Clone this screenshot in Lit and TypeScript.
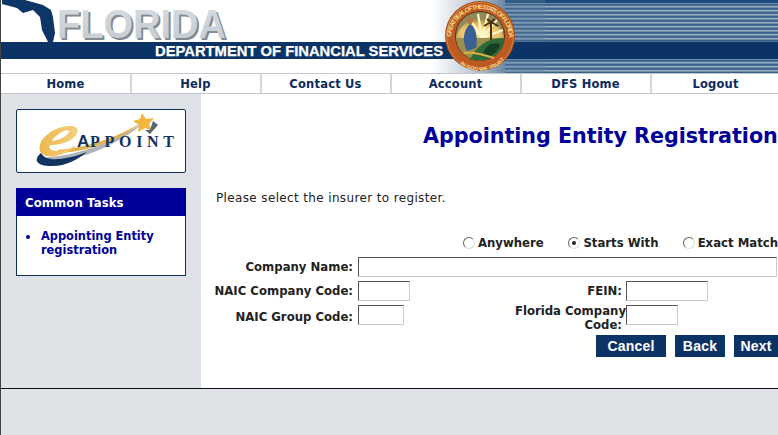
import { LitElement, html, css } from "lit";
import { customElement } from "lit/decorators.js";

@customElement("app-root")
export class AppRoot extends LitElement {
  static styles = css`
    :host { display: block; width: 778px; height: 435px; overflow: hidden; background: #fff; font-family: "DejaVu Sans", Verdana, sans-serif; font-size: 12px; color: #111; }
    * { box-sizing: border-box; }
    .page { display: flex; flex-direction: column; height: 435px; border-left: 1px solid #444; }
    .banner { display: block; height: 73px; flex: none; }
    .nav { display: flex; height: 21px; flex: none; padding-left: 1px; border-top: 1px solid #c4c8cc; border-bottom: 1px solid #c4c8cc; }
    .nav a { width: 130px; flex: none; display: flex; align-items: center; justify-content: center; font-weight: bold; font-size: 11.5px; letter-spacing: .2px; color: #0c2a5c; border-right: 2px solid #d4d6d8; padding: 1px 1px 0 0; }
    .body { display: flex; height: 294px; flex: none; }
    .side { width: 200px; flex: none; background: #dfe3e7; padding: 15px 15px 0; display: flex; flex-direction: column; gap: 15px; }
    .logo { height: 64px; width: 170px; background: #fff; border: 1px solid #0c2f5c; border-radius: 2px; }
    .logo svg { display: block; }
    .tasks { width: 170px; height: 88px; background: #fff; border: 1px solid #0c2f5c; }
    .tasks h2 { height: 28px; background: #000099; color: #fff; font-size: 11.7px; font-weight: bold; line-height: 30px; margin: -1px -1px 0; width: 170px; padding-left: 9px; letter-spacing: .1px; }
    .tasks ul { margin: 0; padding: 13px 0 0 24px; list-style: none; position: relative; color: #000099; font-weight: bold; line-height: 14px; font-size: 11.4px; }
    .tasks li::before { content: ""; position: absolute; left: 9px; top: 19px; width: 4px; height: 4px; border-radius: 50%; background: #000099; }
    .main { flex: 1; min-width: 0; padding: 29px 0 0 15px; overflow: hidden; }
    .title { margin: 0 0 0 207px; font-size: 20.7px; line-height: 26px; font-weight: bold; color: #000099; white-space: nowrap; letter-spacing: -.04px; }
    .intro { margin: 42px 0 0; line-height: 14px; font-size: 12px; letter-spacing: .36px; color: #222; }
    .radios { display: flex; margin: 30px 0 0 247px; height: 16px; align-items: center; font-weight: bold; font-size: 11.7px; white-space: nowrap; color: #222; }
    .radios label { display: flex; align-items: center; gap: 3px; }
    .radios label:nth-child(1) { width: 107px; }
    .radios label:nth-child(2) { width: 116px; }
    .radio { width: 12px; height: 12px; border-radius: 50%; border: 1px solid; border-color: #666 #ddd #ddd #666; background: #fff; position: relative; flex: none; }
    .radio.on::after { content: ""; position: absolute; left: 3px; top: 3px; width: 4px; height: 4px; border-radius: 50%; background: #222; }
    .row { display: flex; align-items: center; font-weight: bold; font-size: 11.7px; color: #222; }
    .lab { width: 145px; flex: none; margin-left: -3px; padding-right: 5px; text-align: right; white-space: nowrap; }
    .r3 .lab { align-self: center; padding-top: 4px; }
    .lab2 { width: 216px; flex: none; text-align: right; padding-right: 4px; }
    .lab3 { width: 222px; flex: none; text-align: right; line-height: 14px; margin-top: -1px; }
    .code { padding-right: 4px; }
    .in { height: 20px; flex: none; background: #fff; border: 1px solid; border-color: #555 #ccc #ccc #555; }
    .r1 { margin-top: 6px; }
    .r2 { margin-top: 4px; }
    .r3 { margin-top: 4px; height: 20px; align-items: flex-start; }
    .w-name { width: 419px; }
    .w52 { width: 52px; }
    .w46 { width: 46px; }
    .w82 { width: 82px; }
    .btns { display: flex; justify-content: flex-end; gap: 9px; margin-top: 10px; }
    .btn { height: 22px; background: #0c3366; color: #fff; font-family: "Liberation Sans", Arial, sans-serif; font-size: 14px; font-weight: bold; display: flex; align-items: center; justify-content: center; letter-spacing: .2px; }
    .cancel { width: 70px; }
    .back { width: 50px; }
    .next { width: 44px; }
    .foot { flex: 1; background: #dfe3e7; border-top: 1px solid #111; }
  `;

  render() {
    return html`<div class="page">
      <svg class="banner" width="777" height="73" viewBox="1 0 777 73">
        <defs>
          <linearGradient id="white" x1="0" x2="1" y1="0" y2="0">
            <stop offset="0" stop-color="#fff" /><stop offset=".22" stop-color="#fff" /><stop offset=".6" stop-color="#c5ced8" /><stop offset="1" stop-color="#5f7f9f" />
          </linearGradient>
          <pattern id="stripes" width="4" height="4" y="1" patternUnits="userSpaceOnUse">
            <rect width="4" height="4" fill="#4a7195" />
            <rect y="1" width="4" height="1" fill="#92abbf" />
            <rect y="2" width="4" height="1" fill="#6f8fa9" />
            <rect y="3" width="4" height="1" fill="#34608a" />
          </pattern>
          <radialGradient id="sun" cx=".5" cy=".75" r=".7">
            <stop offset="0" stop-color="#fff3b8" /><stop offset=".6" stop-color="#e7c166" /><stop offset="1" stop-color="#a08a4c" />
          </radialGradient>
          <linearGradient id="type" x1="0" x2="0" y1="0" y2="1">
            <stop offset="0" stop-color="#d8dde3" /><stop offset="1" stop-color="#c2c9d2" />
          </linearGradient>
          <path id="sealTop" d="M451 38a29 29 0 0 1 58 0" />
          <path id="sealBot" d="M447 38a33 33 0 0 0 66 0" />
        </defs>
        <rect x="1" width="777" height="73" fill="#fff" />
        <rect x="410" width="100" height="73" fill="url(#white)" />
        <rect x="505" width="273" height="73" fill="url(#stripes)" />
        <rect x="505" width="273" height="3" fill="#1d4a7c" />
        <rect x="505" width="40" height="73" fill="#5f7f9f" opacity=".35" />
        <path d="M2 0H25L43 5L51 10L53 17L55 33L53 42H48L42 30L40 17L33 10L23 13L17 8L2 4Z" fill="#0d3568" />
        <text x="57" y="38" font-family="Liberation Sans, Arial, sans-serif" font-size="41" font-weight="bold" textLength="169" lengthAdjust="spacingAndGlyphs" fill="#858a90" transform="translate(2 2)">FLORIDA</text>
        <text x="57" y="38" font-family="Liberation Sans, Arial, sans-serif" font-size="41" font-weight="bold" textLength="169" lengthAdjust="spacingAndGlyphs" fill="url(#type)">FLORIDA</text>
        <rect x="1" y="42" width="777" height="17" fill="#0c3366" />
        <text x="155" y="56" font-family="Liberation Sans, Arial, sans-serif" font-size="14" font-weight="bold" fill="#fff" stroke="#fff" stroke-width=".25" textLength="288" lengthAdjust="spacingAndGlyphs">DEPARTMENT OF FINANCIAL SERVICES</text>
        <circle cx="480" cy="36" r="35" fill="#a5481c" />
        <circle cx="480" cy="36" r="33.5" fill="#bd5a22" stroke="#d98b3a" stroke-width="1" />
        <text font-size="6.3" font-weight="bold" font-family="Liberation Sans, sans-serif" fill="#f4d98c"><textPath href="#sealTop" startOffset="1" textLength="90">GREAT SEAL OF THE STATE OF FLORIDA</textPath></text>
        <text font-size="5.5" font-weight="bold" font-family="Liberation Sans, sans-serif" fill="#f4d98c"><textPath href="#sealBot" startOffset="30">IN GOD WE TRUST</textPath></text>
        <circle cx="480" cy="36" r="24.5" fill="#8f8a5c" stroke="#5d2e14" />
        <path d="M456 38A24.5 24.5 0 0 1 504 38Z" fill="url(#sun)" />
        <path d="M482 38L470 19M482 38L478 14M482 38L488 14M482 38L497 20M482 38L503 30" stroke="#fff7c8" stroke-width="2.2" />
        <path d="M456 38H504A24.5 24.5 0 0 1 480 60.500A24.500 24.500 0 0 1 456 38Z" fill="#9a8f4e" />
        <path d="M470 60C474 50 484 38 504 38C505 48 496 58 486 60Z" fill="#2d6a38" />
        <path d="M483 54C486 44 494 42 500 44C500 50 492 56 486 57Z" fill="#143f22" />
        <path d="M470 24C476 27 478 38 476 48L467 51C462 42 463 30 470 24Z" fill="#3a5f92" />
        <circle cx="470" cy="21" r="3" fill="#b8753c" />
        <path d="M491 40L491 22M491 22L484 26M491 22L498 26M491 22L487 19M491 22L495 19" stroke="#4a3114" stroke-width="2" fill="none" />
        <path d="M464 53C474 52 482 54 494 58" stroke="#dcb043" stroke-width="2" fill="none" />
      </svg>
      <div class="nav">
        <a>Home</a><a>Help</a><a>Contact Us</a><a>Account</a><a>DFS Home</a><a>Logout</a>
      </div>
      <div class="body">
        <div class="side">
          <div class="logo">
            <svg width="168" height="62" viewBox="0 0 168 62">
              <defs><linearGradient id="g" x1="0" x2="1"><stop offset="0" stop-color="#edb84f"/><stop offset="1" stop-color="#f4cf7e"/></linearGradient></defs>
              <path d="M30 47C62 46 100 30 128 12C102 34 66 50 34 52Z" fill="#aeb3ba" />
              <path d="M40 40C70 38 104 26 125 12C106 29 74 41 44 43Z" fill="#e3b04e" />
              <path d="M24 43C17 49 18 55 32 56C48 57 60 50 70 42C58 47 42 50 34 49C28 48 26 46 24 43Z" fill="#11335f" />
              <path d="M23 41C20 28 38 16 53 16C64 16 62 24 55 29C49 33 41 35 33 35C31 38 34 41 40 41C48 41 54 38 59 35C50 46 27 51 23 41ZM35 31C43 30 50 26 52 22C53 20 50 20 47 21C42 23 38 26 35 31Z" fill="url(#g)" />
              <path d="M125 3L129 9L137 8L132 14L135 21L128 18L121 22L122 15L116 11L123 9Z" fill="#f0b93e" />
              <path d="M136 11L141 15L133 24L128 20L133 20Z" fill="#5b6470" />
              <text x="60" y="37" font-family="Liberation Sans, sans-serif" font-weight="bold" font-size="17" fill="#11335f">A</text>
              <text x="73" y="37" font-family="Liberation Serif, serif" font-weight="bold" font-size="16" textLength="84" lengthAdjust="spacing" fill="#11335f">PPOINT</text>
            </svg>
          </div>
          <div class="tasks">
            <h2>Common Tasks</h2>
            <ul><li>Appointing Entity registration</li></ul>
          </div>
        </div>
        <div class="main">
          <h1 class="title">Appointing Entity Registration</h1>
          <p class="intro">Please select the insurer to register.</p>
          <div class="radios">
            <label><span class="radio"></span>Anywhere</label>
            <label><span class="radio on"></span>Starts With</label>
            <label><span class="radio"></span>Exact Match</label>
          </div>
          <div class="row r1"><span class="lab">Company Name:</span><span class="in w-name"></span></div>
          <div class="row r2"><span class="lab">NAIC Company Code:</span><span class="in w52"></span><span class="lab2">FEIN:</span><span class="in w82"></span></div>
          <div class="row r3"><span class="lab">NAIC Group Code:</span><span class="in w46"></span><span class="lab3">Florida Company<br /><span class="code">Code:</span></span><span class="in w52"></span></div>
          <div class="btns">
            <span class="btn cancel">Cancel</span>
            <span class="btn back">Back</span>
            <span class="btn next">Next</span>
          </div>
        </div>
      </div>
      <div class="foot"></div>
    </div>`;
  }
}
